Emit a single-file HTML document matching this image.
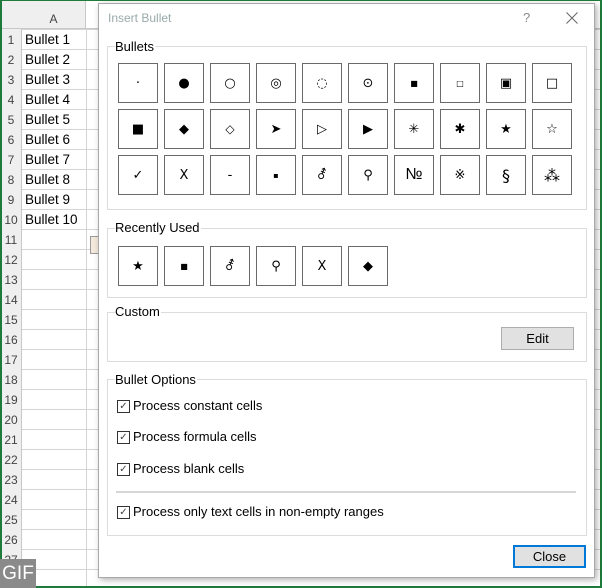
<!DOCTYPE html>
<html><head><meta charset="utf-8"><style>
*{margin:0;padding:0;box-sizing:border-box}
body{width:602px;height:588px;overflow:hidden;background:#fff;font-family:"Segoe UI","Liberation Sans","DejaVu Sans",sans-serif;position:relative}
.abs{position:absolute}
.grid{position:absolute;left:0;top:0;width:602px;height:588px;
background-image:linear-gradient(#d4d4d4 1px,transparent 1px);background-size:100% 20px;background-position:0 9px}
.rh{position:absolute;left:0;top:0;width:22px;height:588px;background:#efefef;border-right:1px solid #c8c8c8}
.rn{position:absolute;left:0;width:22px;font-size:12px;color:#444;text-align:center;line-height:20px}
.cell{position:absolute;left:25px;font-size:13.5px;color:#000;line-height:20px}
.dlg{position:absolute;left:98px;top:3px;width:497px;height:575px;background:#fff;border:1px solid #a9a9a9;box-shadow:2px 2px 6px rgba(0,0,0,.3)}
.grp{position:absolute;border:1px solid #dcdcdc}
.lbl{position:absolute;background:#fff;font-size:13px;color:#000;line-height:16px;padding-right:1px}
.b{position:absolute;width:40px;height:40px;border:1px solid #6a6a6a;background:#fff;display:flex;align-items:center;justify-content:center;font-size:13px;color:#000;font-family:"DejaVu Sans",sans-serif}
.cb{position:absolute;left:117px;font-size:13px;line-height:16px}
.cb span.box{position:absolute;left:0;top:2px;width:13px;height:13px;border:1px solid #333;font-size:10px;line-height:11px;text-align:center;color:#444}
.cb span.t{position:absolute;left:16px;top:0;white-space:nowrap}
.btn{position:absolute;background:#e1e1e1;border:1px solid #adadad;font-size:13px;text-align:center}
</style></head><body>
<div class="grid"></div>
<div class="abs" style="left:0;top:0;width:602px;height:29px;background:#fff;border-bottom:1px solid #c8c8c8"></div>
<div class="rh"></div>
<div class="abs" style="left:22px;top:0;width:64px;height:29px;background:#efefef;border-right:1px solid #c8c8c8;border-bottom:1px solid #c8c8c8;font-size:12px;color:#444;text-align:center;line-height:38px">A</div>
<div class="abs" style="left:86px;top:29px;width:1px;height:559px;background:#d4d4d4"></div>
<div class="abs" style="left:0;top:0;width:22px;height:29px;background:#efefef;border-bottom:1px solid #c8c8c8"></div>
<div class="rn" style="top:30px">1</div><div class="rn" style="top:50px">2</div><div class="rn" style="top:70px">3</div><div class="rn" style="top:90px">4</div><div class="rn" style="top:110px">5</div><div class="rn" style="top:130px">6</div><div class="rn" style="top:150px">7</div><div class="rn" style="top:170px">8</div><div class="rn" style="top:190px">9</div><div class="rn" style="top:210px">10</div><div class="rn" style="top:230px">11</div><div class="rn" style="top:250px">12</div><div class="rn" style="top:270px">13</div><div class="rn" style="top:290px">14</div><div class="rn" style="top:310px">15</div><div class="rn" style="top:330px">16</div><div class="rn" style="top:350px">17</div><div class="rn" style="top:370px">18</div><div class="rn" style="top:390px">19</div><div class="rn" style="top:410px">20</div><div class="rn" style="top:430px">21</div><div class="rn" style="top:450px">22</div><div class="rn" style="top:470px">23</div><div class="rn" style="top:490px">24</div><div class="rn" style="top:510px">25</div><div class="rn" style="top:530px">26</div><div class="rn" style="top:550px">27</div>
<div class="cell" style="top:30px">Bullet 1</div><div class="cell" style="top:50px">Bullet 2</div><div class="cell" style="top:70px">Bullet 3</div><div class="cell" style="top:90px">Bullet 4</div><div class="cell" style="top:110px">Bullet 5</div><div class="cell" style="top:130px">Bullet 6</div><div class="cell" style="top:150px">Bullet 7</div><div class="cell" style="top:170px">Bullet 8</div><div class="cell" style="top:190px">Bullet 9</div><div class="cell" style="top:210px">Bullet 10</div>
<div class="abs" style="left:90px;top:236px;width:10px;height:18px;border:1px solid #999;background:#f4e9dc"></div>
<div class="abs" style="left:0;top:0;width:602px;height:588px;border:2px solid #1e7b3c;border-top:1px solid #1e7b3c"></div>
<div class="abs" style="left:0;top:559px;width:36px;height:29px;background:#8a8a8a;color:#fff;font-size:19px;line-height:29px;text-align:center">GIF</div>

<div class="dlg"></div>
<div class="abs" style="left:108px;top:11px;font-size:12px;color:#9aa">Insert Bullet</div>
<div class="abs" style="left:523px;top:10px;font-size:13px;color:#888">?</div>
<svg class="abs" style="left:566px;top:12px" width="12" height="12"><path d="M0.5 0.5L11.5 11.5M11.5 0.5L0.5 11.5" stroke="#666" stroke-width="1"/></svg>

<div class="grp" style="left:107px;top:46px;width:480px;height:164px"></div>
<div class="lbl" style="left:115px;top:39px">Bullets</div>
<div class="b" style="left:118px;top:63px">·</div><div class="b" style="left:164px;top:63px">●</div><div class="b" style="left:210px;top:63px">○</div><div class="b" style="left:256px;top:63px">◎</div><div class="b" style="left:302px;top:63px">◌</div><div class="b" style="left:348px;top:63px">⊙</div><div class="b" style="left:394px;top:63px;font-size:8px">■</div><div class="b" style="left:440px;top:63px;font-size:8px">□</div><div class="b" style="left:486px;top:63px">▣</div><div class="b" style="left:532px;top:63px">□</div>
<div class="b" style="left:118px;top:109px">■</div><div class="b" style="left:164px;top:109px">◆</div><div class="b" style="left:210px;top:109px;font-size:12px">◇</div><div class="b" style="left:256px;top:109px">➤</div><div class="b" style="left:302px;top:109px">▷</div><div class="b" style="left:348px;top:109px">▶</div><div class="b" style="left:394px;top:109px">✳</div><div class="b" style="left:440px;top:109px">✱</div><div class="b" style="left:486px;top:109px">★</div><div class="b" style="left:532px;top:109px">☆</div>
<div class="b" style="left:118px;top:155px">✓</div><div class="b" style="left:164px;top:155px">X</div><div class="b" style="left:210px;top:155px">-</div><div class="b" style="left:256px;top:155px;font-size:8px">▪</div><div class="b" style="left:302px;top:155px">⚦</div><div class="b" style="left:348px;top:155px">⚲</div><div class="b" style="left:394px;top:155px;font-family:'Liberation Sans';font-size:16px">№</div><div class="b" style="left:440px;top:155px">※</div><div class="b" style="left:486px;top:155px;font-size:16px">§</div><div class="b" style="left:532px;top:155px;font-size:16px">⁂</div>

<div class="grp" style="left:107px;top:228px;width:480px;height:70px"></div>
<div class="lbl" style="left:115px;top:220px">Recently Used</div>
<div class="b" style="left:118px;top:246px">★</div><div class="b" style="left:164px;top:246px;font-size:8px">■</div><div class="b" style="left:210px;top:246px">⚦</div><div class="b" style="left:256px;top:246px">⚲</div><div class="b" style="left:302px;top:246px">X</div><div class="b" style="left:348px;top:246px">◆</div>

<div class="grp" style="left:107px;top:312px;width:480px;height:50px"></div>
<div class="lbl" style="left:115px;top:304px">Custom</div>
<div class="btn" style="left:501px;top:327px;width:73px;height:23px;line-height:21px">Edit</div>

<div class="grp" style="left:107px;top:379px;width:480px;height:157px"></div>
<div class="lbl" style="left:115px;top:372px">Bullet Options</div>
<div class="cb" style="top:398px"><span class="box">✓</span><span class="t">Process constant cells</span></div>
<div class="cb" style="top:429px"><span class="box">✓</span><span class="t">Process formula cells</span></div>
<div class="cb" style="top:461px"><span class="box">✓</span><span class="t">Process blank cells</span></div>
<div class="abs" style="left:116px;top:491px;width:460px;height:2px;background:#d6d6d6"></div>
<div class="cb" style="top:504px"><span class="box">✓</span><span class="t">Process only text cells in non-empty ranges</span></div>

<div class="btn" style="left:513px;top:545px;width:73px;height:23px;border:2px solid #0078d7;line-height:19px">Close</div>
</body></html>
